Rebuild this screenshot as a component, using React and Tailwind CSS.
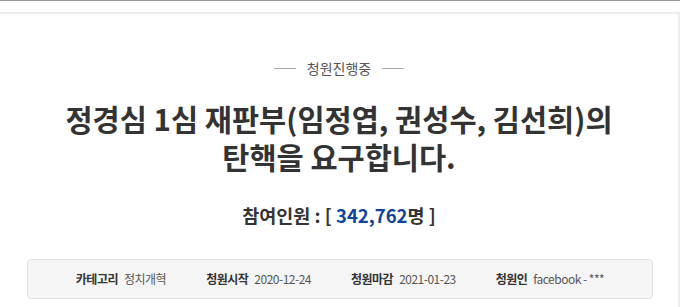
import React from 'react';

const font = { fontFamily: '"Noto Sans CJK KR", "Noto Sans", sans-serif' };

const Info = ({ label, value }) => (
    <div className="flex items-center gap-[6px]">
        <span className="font-bold text-[#333333]">{label}</span>
        <span className="text-[#555555]">{value}</span>
    </div>
);

const App = () => {
    return (
        <div className="w-[680px] h-[307px] bg-white overflow-hidden border-t border-[#9a9a9a]" style={font}>
            <div className="mt-[11px] h-[300px] border-t-2 border-r-2 border-[#eeeeee] pt-[44px]">
                {/* Status */}
                <div className="flex items-center justify-center gap-[11px] text-[14px] leading-[20px] text-[#555555]">
                    <span className="w-[22px] h-px bg-[#aaaaaa]"></span>
                    <span>청원진행중</span>
                    <span className="w-[22px] h-px bg-[#aaaaaa]"></span>
                </div>

                {/* Title */}
                <h1 className="mt-[21px] text-center text-[29.5px] leading-[38px] font-bold text-[#333333]">
                    정경심 1심 재판부(임정엽, 권성수, 김선희)의<br />
                    탄핵을 요구합니다.
                </h1>

                {/* Count */}
                <div className="mt-[27px] text-center text-[18.5px] leading-[26px] font-bold text-[#333333]">
                    참여인원 : [ <span className="text-[#10449a]">342,762</span>명 ]
                </div>

                {/* Details */}
                <div className="mt-[31px] ml-[27px] w-[626px] h-[40px] bg-[#f5f5f5] border border-[#e0e0e0] rounded-[4px] flex items-center justify-center gap-[40px] text-[12px] tracking-[-0.5px]">
                    <Info label="카테고리" value="정치개혁" />
                    <Info label="청원시작" value="2020-12-24" />
                    <Info label="청원마감" value="2021-01-23" />
                    <Info label="청원인" value="facebook - ***" />
                </div>
            </div>
        </div>
    );
};

export default App;
